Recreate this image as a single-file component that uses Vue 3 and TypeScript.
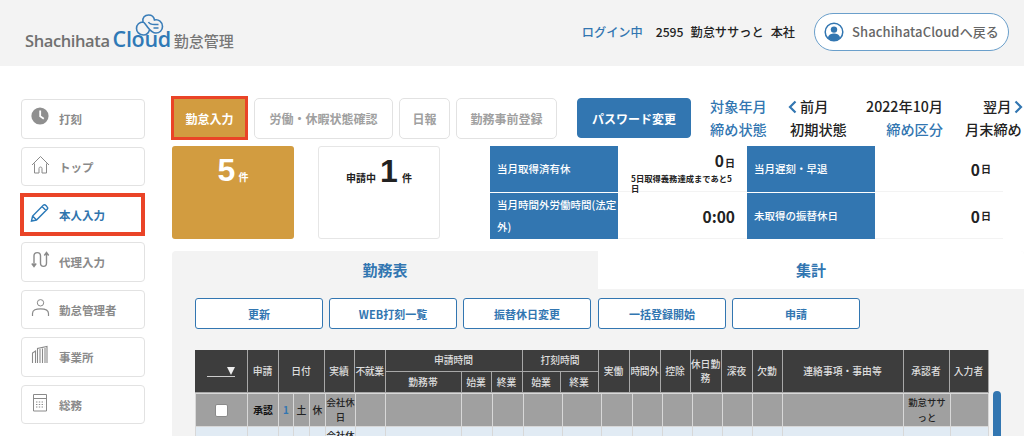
<script setup lang="ts">
const side = [
  { label: '打刻', icon: 'clock' },
  { label: 'トップ', icon: 'home' },
  { label: '本人入力', icon: 'pen', active: true },
  { label: '代理入力', icon: 'swap' },
  { label: '勤怠管理者', icon: 'user' },
  { label: '事業所', icon: 'bldg' },
  { label: '総務', icon: 'calc' },
]
const actions = ['更新', 'WEB打刻一覧', '振替休日変更', '一括登録開始', '申請']
const headCols = [52, 31, 46, 30, 31, 76, 30, 31, 38, 38, 31, 31, 30, 31, 31, 30, 121, 46, 39]
const bodyCols = [52, 31, 15, 16, 16, 30, 30, 76, 31, 31, 39, 39, 31, 30, 30, 30, 30, 30, 121, 47, 38]
const rowCells = ['', '', '', '', '', '', '', '', '', '', '', '']
</script>

<template>
  <div class="page">
    <header class="top">
      <div class="logo">
        <span class="l-sha">Shachihata</span>
        <span class="l-cloud">Cloud
          <svg class="l-icon" viewBox="0 0 28 22" fill="none" stroke="#3a7db8" stroke-width="1.6">
            <path d="M8 21 C3.5 21 1 17.5 1 14.5 C1 10.5 4 8 7.5 8 C6.5 3.5 9.5 1 13 1 C16 1 18.5 3 19 6 C23 5 27 8 27 12.5 C27 16.5 24 19 20.5 19 C15.5 19 13 14 10.5 11 C9.5 9.5 8.5 8.2 7.5 8 M8 21 C11 21 13 19 14 16" />
            <path d="M13 8 C14 10 16 10.5 19 10.5 H23 M18 14 H23" />
          </svg>
        </span>
        <span class="l-kin">勤怠管理</span>
      </div>
      <div class="who">
        <span class="login">ログイン中</span>
        <span class="uid">2595</span>
        <span class="uid">勤怠ササっと</span>
        <span class="uid">本社</span>
        <button class="back">
          <svg viewBox="0 0 20 20" class="back-ic">
            <circle cx="10" cy="10" r="8.8" fill="none" stroke="#3276b1" stroke-width="1.5" />
            <circle cx="10" cy="7.6" r="3.2" fill="#3276b1" />
            <path d="M3.9 15.5 C5 12.3 7.5 11.6 10 11.6 C12.5 11.6 15 12.3 16.1 15.5 C14.5 17.8 12.3 18.6 10 18.6 C7.7 18.6 5.5 17.8 3.9 15.5 Z" fill="#3276b1" />
          </svg>
          ShachihataCloudへ戻る
        </button>
      </div>
    </header>

    <div class="body">
      <nav class="side">
        <a v-for="s in side" :key="s.label" class="s-item" :class="{ on: s.active }">
          <svg class="s-ic" viewBox="0 0 20 20" fill="none" stroke="currentColor" stroke-width="1">
            <template v-if="s.icon === 'clock'">
              <circle cx="9" cy="9" r="8.6" fill="#8f8f8f" stroke="none" />
              <path d="M9.2 3.5 V9.3 L12.8 11.8" stroke="#fff" stroke-width="1.8" />
            </template>
            <template v-else-if="s.icon === 'home'">
              <path d="M1 10 L9.5 1.5 L18 10 M3.5 8.5 V18 H8 V13.5 C8 11.5 11 11.5 11 13.5 V18 H15.5 V8.5" />
            </template>
            <template v-else-if="s.icon === 'pen'">
              <path d="M1.5 18 L2.6 13 L13.5 2 C15 1 18.5 4.2 17.4 6 L6.5 17 Z M12 3.5 L16 7.5 M2.6 13 L6.5 17" stroke="#2a79b8" stroke-width="1.4" />
            </template>
            <template v-else-if="s.icon === 'swap'">
              <path d="M3 16 V6 C3 1.5 9.5 1.5 9.5 6 V13 C9.5 17.5 15.5 17.5 15.5 13 V3 M0.8 13.5 L3 16.5 L5.2 13.5 M13.3 5.5 L15.5 2.5 L17.7 5.5" stroke-width="1.4" />
            </template>
            <template v-else-if="s.icon === 'user'">
              <circle cx="9.5" cy="4.8" r="3.2" />
              <path d="M1.5 18 V15.5 C1.5 12 5 10.8 9.5 10.8 C14 10.8 17.5 12 17.5 15.5 V18" stroke-width="1.2" />
            </template>
            <template v-else-if="s.icon === 'bldg'">
              <path d="M1.5 18 V8 L4.5 6 V18 M6.5 18 V3.5 L16 1.5 V18 M9 4 V18 M11.5 3.5 V18 M14 3 V18" stroke-width="1.1" />
            </template>
            <template v-else>
              <path d="M2.5 1.5 H15.5 V18 H2.5 Z M2.5 5.5 H15.5" />
              <path d="M5 9 H13.5 M5 11.5 H13.5 M5 14 H13.5" stroke-dasharray="1.4 1.4" />
            </template>
          </svg>
          <span class="s-txt">{{ s.label }}</span>
        </a>
      </nav>

      <main class="main">
        <div class="bar">
          <button class="tb act">勤怠入力</button>
          <button class="tb w139">労働・休暇状態確認</button>
          <button class="tb w51">日報</button>
          <button class="tb w101">勤務事前登録</button>
          <button class="pw">パスワード変更</button>
          <div class="info">
            <span class="b c1">対象年月</span>
            <span class="c2">
              <svg class="chev" viewBox="0 0 10 14" fill="none" stroke="#3276b1" stroke-width="2.2"><path d="M7.5 1.5 L2 7 L7.5 12.5" /></svg>前月
            </span>
            <span class="c3">2022年10月</span>
            <span class="c4">翌月<svg class="chev" viewBox="0 0 10 14" fill="none" stroke="#3276b1" stroke-width="2.2"><path d="M2.5 1.5 L8 7 L2.5 12.5" /></svg></span>
            <span class="b c1">締め状態</span>
            <span class="c2 c2b">初期状態</span>
            <span class="b c3">締め区分</span>
            <span class="c4 c4b">月末締め</span>
          </div>
        </div>

        <div class="cards">
          <div class="card gold"><b>5</b><small>件</small></div>
          <div class="card white"><span>申請中</span><b>1</b><small>件</small></div>
          <div class="stats">
            <div class="st-l">当月取得済有休</div>
            <div class="st-v st-note"><p><b>0</b><small>日</small></p><em>5日取得義務達成まであと5日</em></div>
            <div class="st-l">当月遅刻・早退</div>
            <div class="st-v"><b>0</b><small>日</small></div>
            <div class="st-l">当月時間外労働時間(法定外)</div>
            <div class="st-v"><b>0:00</b></div>
            <div class="st-l">未取得の振替休日</div>
            <div class="st-v"><b>0</b><small>日</small></div>
          </div>
        </div>

        <section class="panel">
          <div class="tabs">
            <div class="tab">勤務表</div>
            <div class="tab cur">集計</div>
          </div>
          <div class="acts">
            <button v-for="a in actions" :key="a" class="ab">{{ a }}</button>
          </div>
          <div class="tbl-wrap">
            <div class="tbls">
              <table class="hd">
                <colgroup><col v-for="(c, i) in headCols" :key="i" :style="{ width: c + 'px' }" /></colgroup>
                <thead>
                  <tr>
                    <th rowspan="2"><span class="sel"></span></th>
                    <th rowspan="2">申請</th>
                    <th rowspan="2">日付</th>
                    <th rowspan="2">実績</th>
                    <th rowspan="2" class="nar">不就業</th>
                    <th colspan="3">申請時間</th>
                    <th colspan="2">打刻時間</th>
                    <th rowspan="2">実働</th>
                    <th rowspan="2" class="nar">時間外</th>
                    <th rowspan="2">控除</th>
                    <th rowspan="2" class="wrap">休日勤務</th>
                    <th rowspan="2">深夜</th>
                    <th rowspan="2">欠勤</th>
                    <th rowspan="2">連絡事項・事由等</th>
                    <th rowspan="2">承認者</th>
                    <th rowspan="2">入力者</th>
                  </tr>
                  <tr>
                    <th>勤務帯</th><th>始業</th><th>終業</th><th>始業</th><th>終業</th>
                  </tr>
                </thead>
              </table>
              <table class="bd">
                <colgroup><col v-for="(c, i) in bodyCols" :key="i" :style="{ width: c + 'px' }" /></colgroup>
                <tbody>
                  <tr class="g">
                    <td><span class="chk"></span></td>
                    <td class="strong">承認</td>
                    <td class="day">1</td>
                    <td>土</td>
                    <td>休</td>
                    <td class="wr">会社休日</td>
                    <td></td>
                    <td v-for="(c, i) in rowCells" :key="i">{{ c }}</td>
                    <td class="wr">勤怠ササっと</td>
                    <td></td>
                  </tr>
                  <tr class="l">
                    <td><span class="chk"></span></td>
                    <td></td>
                    <td></td>
                    <td></td>
                    <td></td>
                    <td class="wr">会社休日</td>
                    <td></td>
                    <td v-for="(c, i) in rowCells" :key="i">{{ c }}</td>
                    <td></td>
                    <td></td>
                  </tr>
                </tbody>
              </table>
            </div>
            <div class="thumb"></div>
          </div>
        </section>
      </main>
    </div>
  </div>
</template>

<style scoped>
.page {
  width: 1024px;
  height: 436px;
  overflow: hidden;
  background: #fff;
  font-family: "Noto Sans CJK JP", "Noto Sans", sans-serif;
  color: #222;
}
button { font-family: inherit; cursor: pointer; padding: 0; background: #fff; }
.top {
  height: 66px;
  background: #f3f3f3;
  display: flex;
  justify-content: space-between;
  padding: 0 15px 0 25px;
  box-sizing: border-box;
}
.logo { display: flex; align-items: baseline; padding-top: 26px; height: 40px; }
.l-sha { font-family: "Open Sans", sans-serif; font-size: 16.5px; font-weight: 600; color: #707070; letter-spacing: -0.4px; }
.l-cloud {
  position: relative;
  font-family: "Open Sans", sans-serif;
  font-size: 21.5px;
  font-weight: 600;
  color: #2f79b6;
  margin-left: 3px;
  letter-spacing: -0.3px;
  line-height: 26px;
}
.l-icon { position: absolute; left: 22px; top: -12px; width: 29px; height: 22px; }
.l-kin { font-size: 15px; font-weight: 500; color: #777; margin-left: 3px; }
.who { display: flex; align-items: center; height: 63px; font-size: 12.2px; font-weight: 500; }
.login { color: #3276b1; margin-right: 13px; font-size: 12.2px; }
.uid { margin-right: 7px; color: #222; }
.uid:nth-child(4) { margin-right: 9px; }
.back {
  margin-left: 10px;
  width: 195px;
  height: 38px;
  border: 1px solid #6a9fcb;
  border-radius: 19px;
  color: #666;
  font-size: 13px;
  font-weight: 500;
  display: flex;
  align-items: center;
  gap: 8px;
  padding-left: 9px;
  white-space: nowrap;
  box-sizing: border-box;
  background: #fff;
  letter-spacing: 0.1px;
}
.back-ic { width: 20px; height: 20px; flex: none; }
.body { display: flex; }
.side {
  width: 172px;
  flex: none;
  padding: 33px 0 0 21px;
  box-sizing: border-box;
  display: flex;
  flex-direction: column;
  gap: 8px;
}
.s-item {
  width: 124px;
  height: 39.5px;
  flex: none;
  box-sizing: border-box;
  border: 1px solid #e2e2e2;
  border-radius: 4px;
  display: flex;
  align-items: center;
  gap: 8px;
  padding-left: 9px;
  color: #8a8a8a;
  font-size: 11.5px;
  font-weight: 700;
}
.s-txt { padding-top: 1px; }
.s-ic { width: 20px; height: 20px; flex: none; margin-bottom: 3px; }
.s-item.on {
  border: 4px solid #ea4427;
  border-radius: 0;
  width: 125px;
  height: 43px;
  margin: -1px 0 -2px -1px;
  color: #2f74ad;
  font-size: 11.5px;
  padding-left: 6px;
  gap: 9px;
}
.main { width: 852px; flex: none; padding-top: 30px; }
.bar { display: flex; align-items: flex-start; gap: 6px; height: 44px; }
.tb {
  height: 41px;
  margin-top: 2px;
  border: 1px solid #e2e2e2;
  border-radius: 5px;
  color: #a0a0a0;
  font-size: 12px;
  font-weight: 700;
  box-sizing: border-box;
  white-space: nowrap;
  flex: none;
}
.act {
  width: 77px;
  height: 44px;
  margin: 0;
  margin-left: -1px;
  border: 3.5px solid #ea4427;
  border-radius: 0;
  background: #d29c40;
  color: #fff;
}
.w139 { width: 139px; }
.w51 { width: 51px; }
.w101 { width: 101px; }
.pw {
  width: 114px;
  height: 40px;
  margin: 2px 0 0 14px;
  background: #3276b1;
  color: #fff;
  border: 1px solid #3276b1;
  border-radius: 4px;
  font-size: 12px;
  font-weight: 700;
  flex: none;
}
.info {
  margin-left: 13px;
  margin-top: -1px;
  width: 320px;
  flex: none;
  display: grid;
  grid-template-columns: 78px 78px 77px 80px;
  grid-auto-rows: 23px;
  font-size: 14.2px;
  line-height: 23px;
  white-space: nowrap;
  font-weight: 500;
}
.info .b { color: #3276b1; }
.info .c2 { text-align: left; }
.info .c3 { text-align: right; }
.info .c4 { padding-left: 40px; }
.info .c2b { padding-left: 2px; }
.info .c4b { padding-left: 22px; }
.chev { width: 10px; height: 14px; margin: 0 2px 0 0; vertical-align: -2px; }
.c4 .chev { margin: 0 0 0 2px; }
.cards { display: flex; margin-top: 6px; height: 93px; }
.card {
  width: 122px;
  height: 93px;
  box-sizing: border-box;
  border-radius: 3px;
  display: flex;
  justify-content: center;
  align-items: baseline;
  flex: none;
}
.card b { font-family: "Liberation Sans", sans-serif; font-size: 32px; line-height: 48px; font-weight: 700; }
.card small { font-size: 10px; font-weight: 700; }
.gold { background: #d29c40; color: #fff; }
.gold small { margin-left: 3px; }
.white { margin-left: 24px; border: 1px solid #e6e6e6; color: #222; }
.white span { font-size: 10px; font-weight: 700; margin-right: 4px; }
.white b { margin-right: 4px; }
.stats {
  margin-left: 50px;
  width: 513px;
  height: 93px;
  flex: none;
  display: grid;
  grid-template-columns: 128px 129px 128px 128px;
  grid-template-rows: 46px 46px;
  row-gap: 1px;
}
.st-l {
  background: #3276b1;
  color: #fff;
  font-size: 10.5px;
  font-weight: 500;
  line-height: 22px;
  padding-left: 7px;
  display: flex;
  align-items: center;
}
.st-v {
  font-size: 15.5px;
  font-weight: 700;
  display: flex;
  justify-content: flex-end;
  align-items: center;
  padding-right: 12px;
  padding-left: 13px;
  border-bottom: 1px solid #f3f3f3;
  box-sizing: border-box;
}
.st-v small { font-size: 10px; font-weight: 700; margin-left: 1px; }
.st-v b { font-weight: 700; }
.st-note { display: block; padding-top: 4px; }
.st-note p { margin: 0; text-align: right; line-height: 20px; }
.st-note em { display: block; font-style: normal; font-size: 8.3px; line-height: 10px; font-weight: 700; }
.panel { margin-top: 12px; background: #f3f3f3; border-radius: 4px 4px 0 0; height: 200px; }
.tabs { display: grid; grid-template-columns: 426px 426px; height: 38px; }
.tab {
  text-align: center;
  line-height: 38px;
  color: #3276b1;
  font-size: 15px;
  font-weight: 700;
}
.cur { background: #fff; border-radius: 0 4px 0 0; }
.acts { display: flex; gap: 6px; padding: 9px 0 0 23px; }
.ab {
  width: 128px;
  height: 31px;
  border: 1px solid #3276b1;
  border-radius: 3px;
  background: #fff;
  color: #3276b1;
  font-size: 11px;
  font-weight: 700;
  box-sizing: border-box;
  flex: none;
}
.ab:nth-child(4) { margin-left: 1px; }
.tbl-wrap { display: flex; padding: 21px 0 0 23px; align-items: flex-start; }
.tbls { width: 793px; flex: none; }
table { table-layout: fixed; border-collapse: collapse; width: 793px; }
.hd th {
  background: #3d3d3d;
  color: #ddd;
  font-size: 9.8px;
  font-weight: 500;
  border: 1px solid #a8a8a8;
  border-top: 0;
  padding: 0;
  height: 20.5px;
  line-height: 14.5px;
}
.hd th:first-child { border-left: 0; }
.hd th.nar { letter-spacing: -0.5px; }
.sel {
  display: block;
  width: 28px;
  margin: 0 auto;
  height: 10px;
  border-bottom: 1px solid #ccc;
  position: relative;
}
.sel::after {
  content: "";
  position: absolute;
  right: 0;
  top: 1px;
  border: 4.5px solid transparent;
  border-top: 8px solid #eee;
  border-bottom: 0;
}
.bd td {
  font-size: 9.8px;
  text-align: center;
  height: 32px;
  padding: 0;
  line-height: 15px;
  color: #222;
  font-weight: 500;
  border-left: 1px solid #d8d8d8;
  border-right: 1px solid #d8d8d8;
  border-top: 1px solid #d8d8d8;
}
.bd .g td { background: #a0a0a0; }
.bd .l td { background: #e1ebf4; }
.bd .strong { font-weight: 700; color: #111; }
.bd .day { color: #3276b1; font-weight: 700; }
.bd .wr { word-break: break-all; font-size: 9.4px; }
.chk {
  display: inline-block;
  width: 13px;
  height: 13px;
  box-sizing: border-box;
  border: 1px solid #8a8a8a;
  border-radius: 2px;
  background: #fff;
  vertical-align: middle;
}
.thumb {
  width: 8px;
  height: 60px;
  flex: none;
  margin: 41px 0 0 5px;
  background: #3276b1;
  border-radius: 4px;
}
</style>
